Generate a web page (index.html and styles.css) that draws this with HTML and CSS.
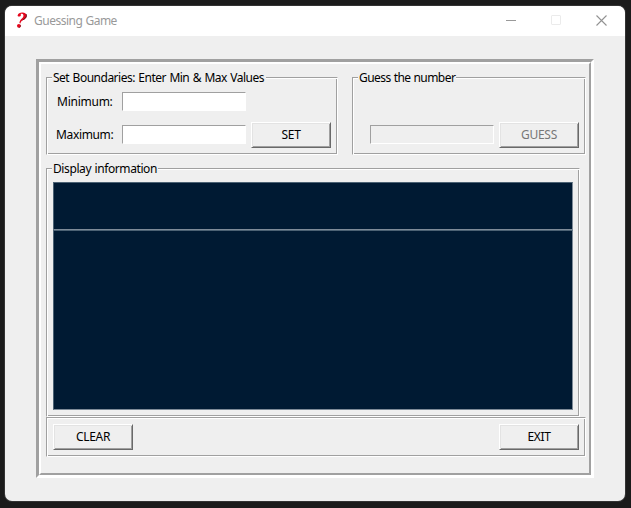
FILE: index.html
```html
<!DOCTYPE html>
<html lang="en">
<head>
<meta charset="utf-8">
<title>Guessing Game</title>
<link rel="stylesheet" href="styles.css">
</head>
<body>
<div class="window">
  <header class="titlebar">
    <svg class="app-icon" width="12" height="17" viewBox="0 0 12 17">
      <path d="M1.6 3.4C2.2 1.4 4 .6 6.2 .6C9 .6 10.8 2 10.6 4.3C10.4 6.7 8.2 7.5 6.4 8.5C5.2 9.3 4.8 10 4.4 11.4L3.4 11.1C3.6 8.8 4.8 7.6 5.9 6.5C7.1 5.3 7.6 4.4 7.4 3.2C7.2 2 5.8 1.5 4.6 1.9C5.2 2.5 5 4.2 3.5 4.5C2.4 4.7 1.6 4.2 1.6 3.4Z" fill="#e4061c"/>
      <path d="M10.2 2.2C11.2 5.2 8.8 6.6 6.8 8" fill="none" stroke="#5c1520" stroke-width="1"/>
      <circle cx="2.9" cy="13.8" r="1.9" fill="#e4061c"/>
      <path d="M4.5 13.2A1.7 1.7 0 0 1 2.8 15.5" fill="none" stroke="#7c1520" stroke-width=".8"/>
    </svg>
    <h1 class="title">Guessing Game</h1>
    <div class="controls">
      <svg width="10" height="10" viewBox="0 0 10 10"><path d="M0 5.5H10" stroke="#999"/></svg>
      <svg width="10" height="10" viewBox="0 0 10 10"><rect x=".5" y=".5" width="9" height="9" rx=".5" fill="none" stroke="#ebebeb"/></svg>
      <svg width="11" height="11" viewBox="0 0 11 11"><path d="M.5.5L10.5 10.5M10.5.5L.5 10.5" stroke="#929292" stroke-width="1.1"/></svg>
    </div>
  </header>
  <main class="panel">
    <div class="panel-inner">
      <div class="top-row">
        <section class="group bounds">
          <h2 class="legend legend-bounds">Set Boundaries: Enter Min &amp; Max Values</h2>
          <div class="field"><label class="min-label" for="min">Minimum:</label><input id="min" class="entry"></div>
          <div class="field"><label class="max-label" for="max">Maximum:</label><input id="max" class="entry"><button class="btn">SET</button></div>
        </section>
        <section class="group guess">
          <h2 class="legend legend-guess">Guess the number</h2>
          <div class="field"><input class="entry" disabled aria-label="Guess"><button class="btn" disabled>GUESS</button></div>
        </section>
      </div>
      <section class="group display">
        <h2 class="legend legend-display">Display information</h2>
        <div class="screen screen-top"></div>
        <div class="screen screen-main"></div>
      </section>
      <footer class="group actions">
        <button class="btn">CLEAR</button>
        <button class="btn">EXIT</button>
      </footer>
    </div>
  </main>
</div>
</body>
</html>
```
FILE: styles.css
```css
* { box-sizing: border-box; }
body {
  margin: 0;
  width: 631px;
  height: 508px;
  padding: 6px 6px 7px 5px;
  overflow: hidden;
  background: #1b1b1b;
  font: 12px/16px "Noto Sans", "Open Sans", sans-serif;
  color: #000;
}
h1, h2 { margin: 0; font: inherit; }
.window {
  height: 495px;
  border-radius: 7px;
  overflow: hidden;
  background: #efefef;
  box-shadow: 0 0 0 1px #333;
}
.titlebar {
  display: flex;
  align-items: center;
  height: 30px;
  padding: 0 18px 0 11px;
  background: #fff;
}
.app-icon { margin-top: -2px; }
.title { margin-left: 6px; color: #999; letter-spacing: -0.5px; word-spacing: 0.5px; }
.controls { display: flex; gap: 35px; margin-left: auto; align-items: center; margin-top: -2px; }
.panel {
  width: 558px;
  height: 419px;
  margin: 23px 0 0 31px;
  border: 3px solid;
  border-color: #a0a0a0 #fff #fff #a0a0a0;
}
.panel-inner {
  height: 413px;
  border: 2px solid;
  border-color: #fff #a0a0a0 #a0a0a0 #fff;
  padding: 13px 3px 0 5px;
}
.group {
  border: 1px solid #a0a0a0;
  border-right-color: #fff;
  border-bottom-color: #fff;
  box-shadow: inset 1px 1px #fff, inset -1px -1px #a0a0a0;
}
.top-row { display: flex; gap: 14px; height: 78px; }
.bounds { width: 292px; }
.guess { width: 234px; }
.legend {
  height: 16px;
  margin: -8px 0 0 5px;
  padding-left: 1px;
  background: #efefef;
  white-space: nowrap;
}
.legend-bounds { width: 214px; letter-spacing: -0.5px; word-spacing: 0.8px; }
.legend-guess { width: 98px; letter-spacing: -0.55px; word-spacing: 0.4px; }
.legend-display { width: 106px; letter-spacing: -0.4px; word-spacing: 0.6px; }
.field { display: flex; align-items: flex-start; height: 26px; margin-top: 6px; }
.bounds .field:nth-child(2) { height: 27px; margin-top: 3px; }
.bounds label { width: 75px; padding-top: 5px; letter-spacing: -0.35px; }
.bounds .min-label { padding-left: 10px; letter-spacing: -0.25px; }
.bounds .max-label { padding-left: 9px; }
.guess .field { margin: 36px 0 0 17px; }
.entry {
  width: 124px;
  height: 19px;
  margin: 3px 0 0;
  padding: 0 2px;
  border: 1px solid;
  border-color: #a0a0a0 #fff #fff #a0a0a0;
  background: #fff;
  font: inherit;
}
.entry:disabled { background: #efefef; }
.btn {
  width: 80px;
  height: 26px;
  padding: 0;
  border: 1px solid;
  border-color: #fff #696969 #696969 #fff;
  box-shadow: inset 1px 1px #e3e3e3, inset -1px -1px #a0a0a0;
  background: #efefef;
  color: #000;
  font: inherit;
  letter-spacing: -0.3px;
}
.btn:disabled { color: #777; }
.field .btn { margin-left: 5px; }
.display { width: 534px; height: 249px; margin-top: 13px; }
.screen {
  width: 520px;
  margin-left: 6px;
  border: 1px solid;
  border-color: #4c6274 #7e8b98 #7e8b98 #4c6274;
  background: #001a33;
}
.screen-top { height: 48px; margin-top: 5px; }
.screen-main { height: 180px; }
.actions {
  display: flex;
  justify-content: space-between;
  width: 540px;
  height: 40px;
  padding: 6px 6px 0;
}
```
